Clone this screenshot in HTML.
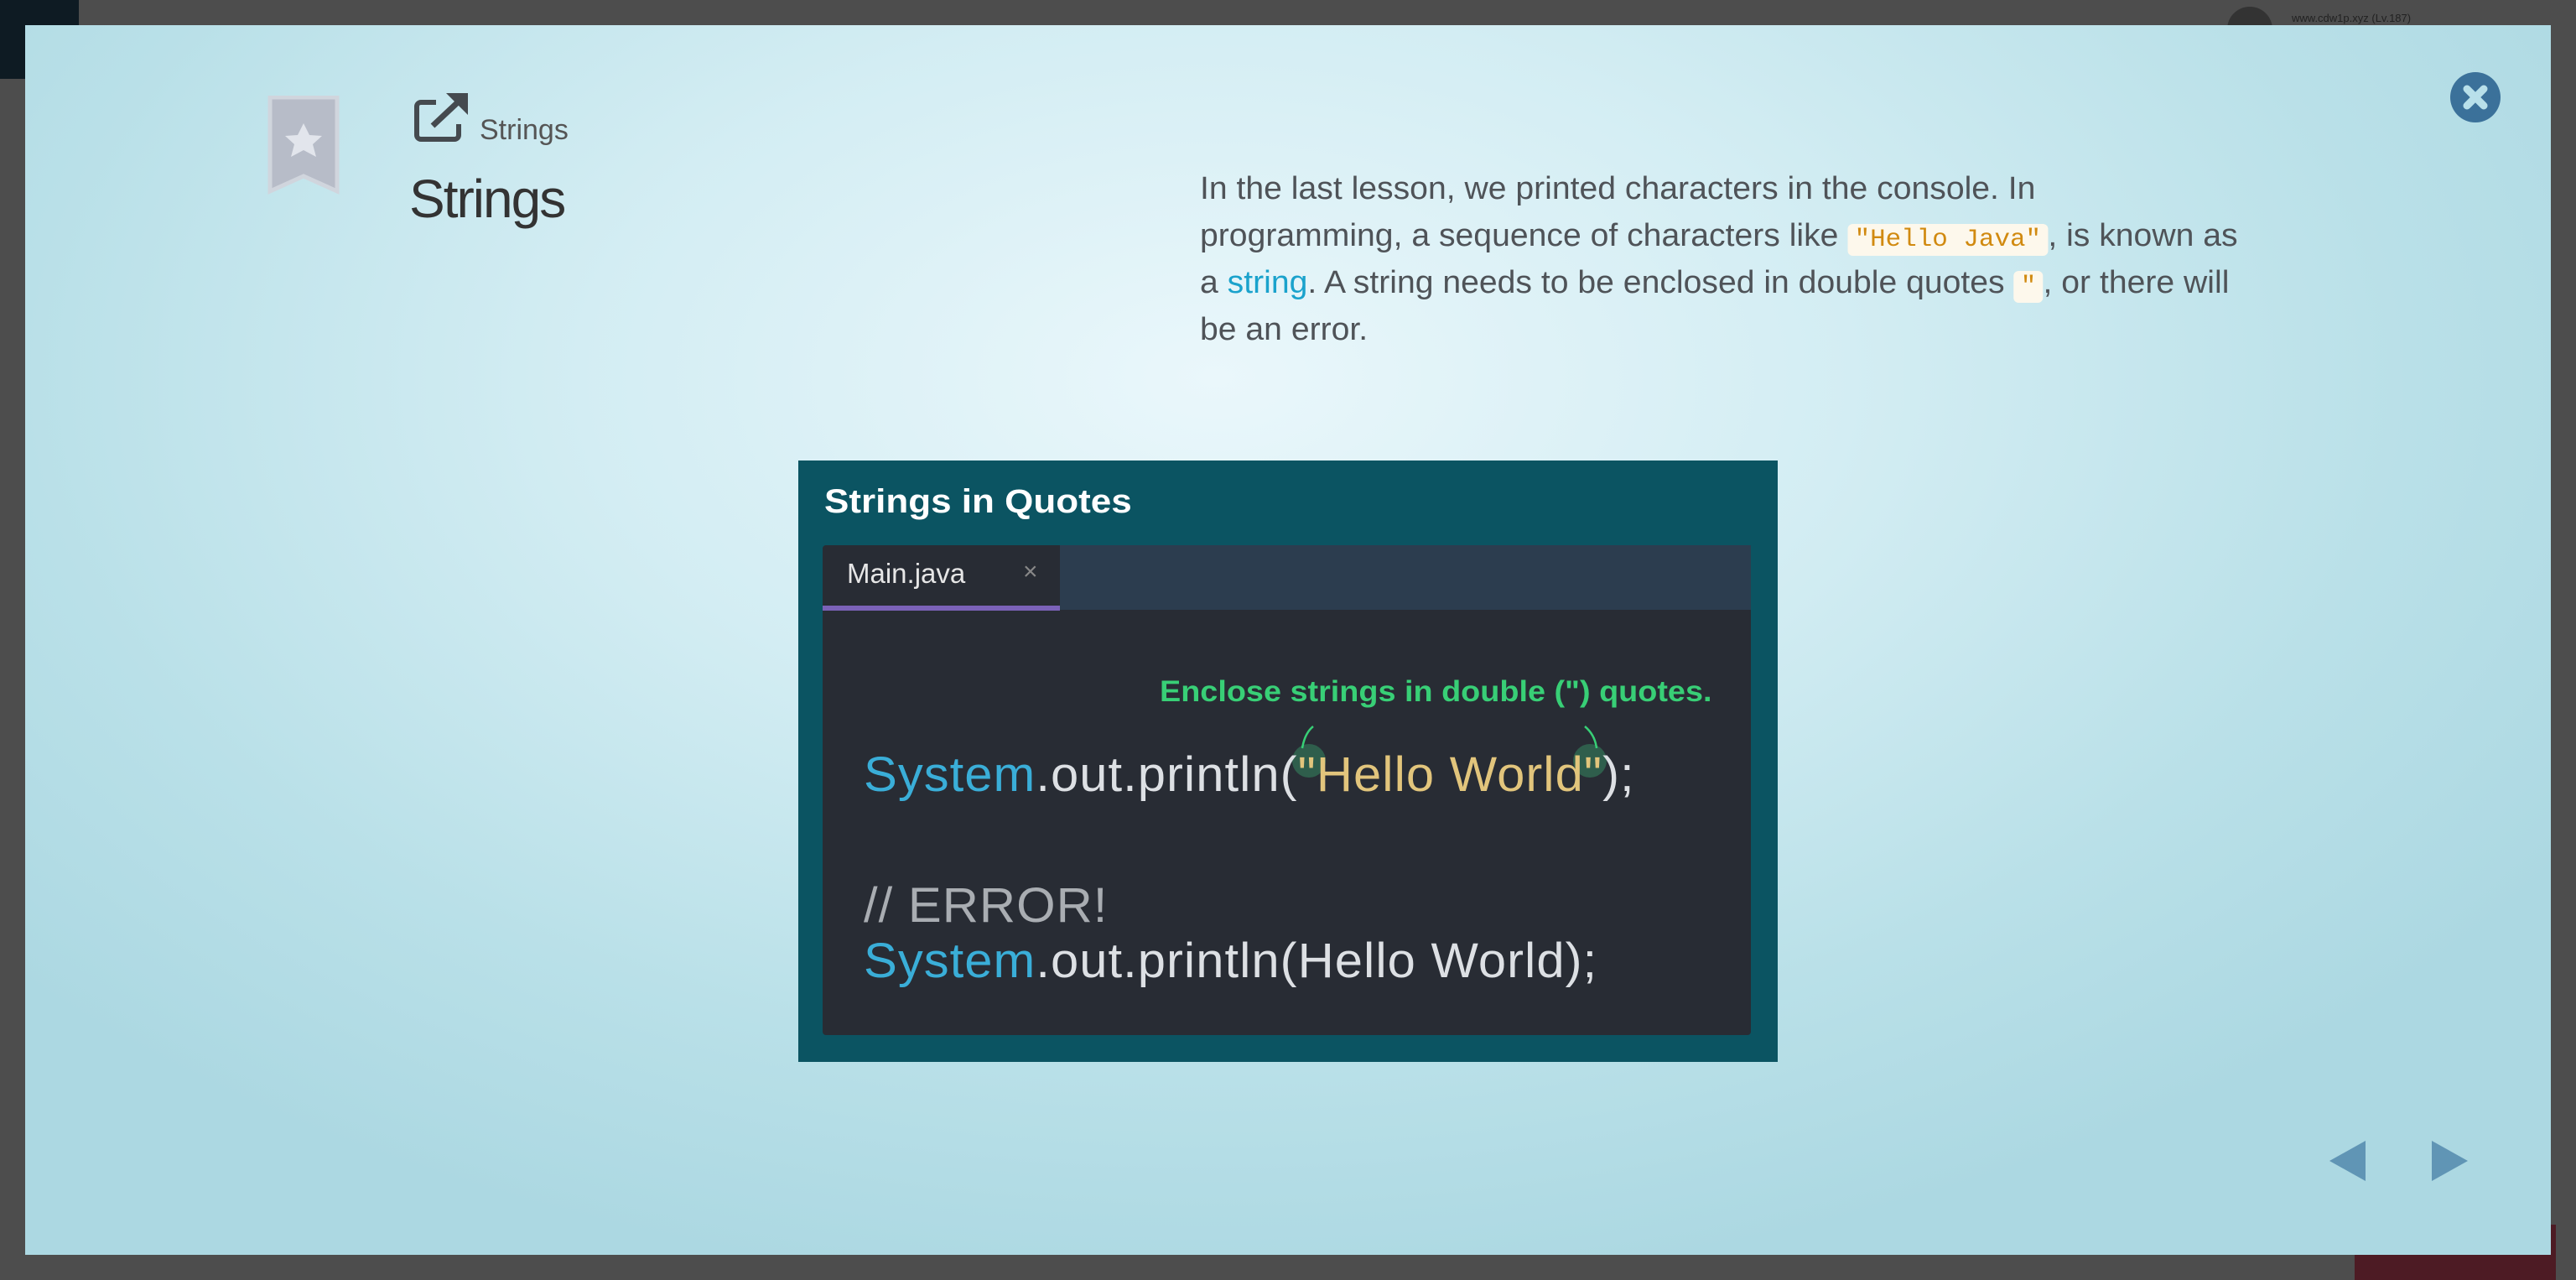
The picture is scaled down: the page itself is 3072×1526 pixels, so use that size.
<!DOCTYPE html>
<html><head><meta charset="utf-8"><style>
*{margin:0;padding:0;box-sizing:border-box}
body{width:3072px;height:1526px;background:#4d4d4d;position:relative;overflow:hidden;font-family:"Liberation Sans",sans-serif}
.abs{position:absolute}
#modal{left:30px;top:30px;width:3012px;height:1466px;background:radial-gradient(ellipse 1900px 1100px at 1420px 420px,#eaf7fb 0%,#d3edf3 40%,#b9e0e8 75%,#acd8e2 100%)}
.p{left:1431px;font-size:38px;color:#4f5358;white-space:nowrap;transform:scaleX(1.03);transform-origin:left center;line-height:56px}
.code{font-family:"Liberation Mono",monospace;background:#fdf8ec;color:#d18a10;border-radius:6px;padding:2px 8px;font-size:30px}
.c{font-size:58px;white-space:nowrap;color:#dde0e4;transform:scaleX(1.03);transform-origin:left center;letter-spacing:1px}
</style></head><body>
<div class="abs" style="left:0;top:0;width:94px;height:94px;background:#0e1b23"></div>
<div class="abs" style="left:2656px;top:8px;width:54px;height:30px;border-radius:27px 27px 0 0;background:#333"></div>
<div class="abs" style="left:2733px;top:14px;font-size:13px;color:#222">www.cdw1p.xyz (Lv.187)</div>
<div class="abs" style="left:2808px;top:1460px;width:240px;height:66px;background:#4d1b24"></div>
<div id="modal" class="abs"></div>
<!-- bookmark -->
<svg class="abs" style="left:319px;top:114px" width="86" height="118" viewBox="0 0 86 118">
<path d="M3 2h80v112l-40-18-40 18z" fill="#b7bcc8" stroke="#d0d5dd" stroke-width="5"/>
<path d="M43 33l7 14 15 1-11 10 4 15-15-8-15 8 4-15-11-10 15-1z" fill="#e2e5ec"/>
</svg>
<!-- external link icon -->
<svg class="abs" style="left:492px;top:108px" width="70" height="64" viewBox="0 0 70 64">
<path d="M28 14H10a5 5 0 0 0-5 5v34a5 5 0 0 0 5 5h40a5 5 0 0 0 5-5V40" fill="none" stroke="#454a4f" stroke-width="6"/>
<path d="M24 42L56 12" stroke="#454a4f" stroke-width="7"/>
<path d="M40 3h26v26z" fill="#454a4f"/>
</svg>
<div class="abs" style="left:572px;top:136px;font-size:34px;color:#555">Strings</div>
<div class="abs" style="left:488px;top:200px;font-size:64px;color:#333;letter-spacing:-2px">Strings</div>
<!-- paragraph -->
<div class="abs p" style="top:197px">In the last lesson, we printed characters in the console. In</div>
<div class="abs p" style="top:253px">programming, a sequence of characters like <span class="code">"Hello Java"</span>, is known as</div>
<div class="abs p" style="top:309px">a <span style="color:#1aa2cc">string</span>. A string needs to be enclosed in double quotes <span class="code">"</span>, or there will</div>
<div class="abs p" style="top:365px">be an error.</div>
<!-- close -->
<div class="abs" style="left:2922px;top:86px;width:60px;height:60px;border-radius:50%;background:#3b719a"></div>
<svg class="abs" style="left:2922px;top:86px" width="60" height="60"><path d="M20 20L40 40M40 20L20 40" stroke="#b8e0ea" stroke-width="9" stroke-linecap="round"/></svg>
<!-- arrows -->
<svg class="abs" style="left:2776px;top:1358px" width="170" height="52"><path d="M2 26L45 2v48z" fill="#6095b5"/><path d="M124 2l43 24-43 24z" fill="#6095b5"/></svg>
<!-- code image -->
<div class="abs" style="left:952px;top:549px;width:1168px;height:717px;background:#0b5462"></div>
<div class="abs" style="left:983px;top:576px;font-size:40px;font-weight:bold;color:#fff;white-space:nowrap;transform:scaleX(1.1);transform-origin:left">Strings in Quotes</div>
<div class="abs" style="left:981px;top:650px;width:1107px;height:584px;background:#282c34;border-radius:4px"></div>
<div class="abs" style="left:1264px;top:650px;width:824px;height:77px;background:#2c3d4f"></div>
<div class="abs" style="left:981px;top:722px;width:283px;height:6px;background:#7b62b8"></div>
<div class="abs" style="left:1010px;top:665px;font-size:33px;color:#e6e6e6">Main.java</div>
<div class="abs" style="left:1220px;top:665px;font-size:30px;color:#888">×</div>
<div class="abs" style="left:1383px;top:805px;font-size:35px;font-weight:bold;color:#38cf76;white-space:nowrap;transform:scaleX(1.08);transform-origin:left">Enclose strings in double (") quotes.</div>
<div class="abs" style="left:1541px;top:887px;width:40px;height:40px;border-radius:50%;background:#2f5e4c"></div>
<div class="abs" style="left:1876px;top:887px;width:40px;height:40px;border-radius:50%;background:#2f5e4c"></div>
<svg class="abs" style="left:1540px;top:862px" width="380" height="40"><path d="M13 30Q16 12 26 4M350 4Q362 14 364 30" stroke="#38cf76" stroke-width="2.5" fill="none"/></svg>
<div class="abs c" style="left:1030px;top:890px"><span style="color:#3aaed8">System</span>.out.println(<span style="color:#e2c57c">"Hello World"</span>);</div>
<div class="abs c" style="left:1030px;top:1046px;color:#a9adb2">// ERROR!</div>
<div class="abs c" style="left:1030px;top:1112px"><span style="color:#3aaed8">System</span>.out.println(Hello World);</div>
</body></html>
